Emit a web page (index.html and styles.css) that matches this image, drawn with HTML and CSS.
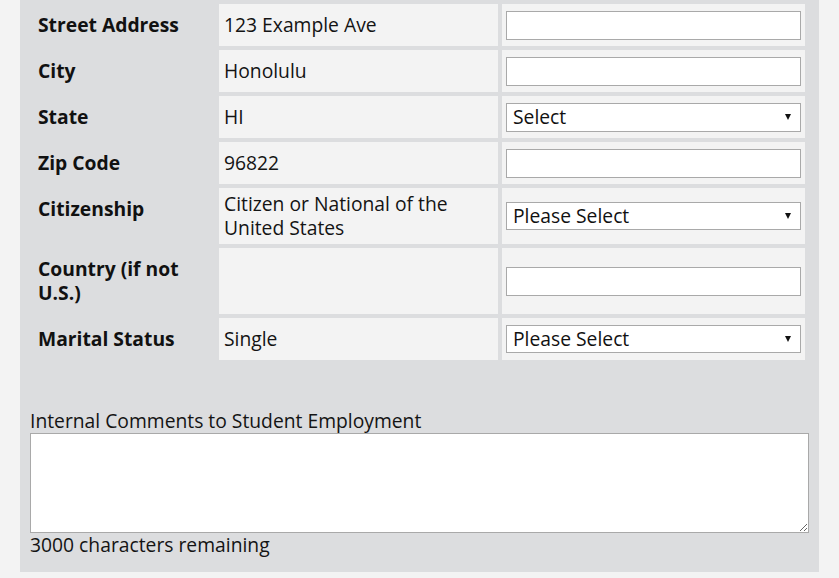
FILE: index.html
```html
<!DOCTYPE html>
<html>
<head>
<meta charset="utf-8">
<link rel="stylesheet" href="styles.css">
</head>
<body>
<div class="panel">
  <table class="form-table">
    <colgroup><col class="c1"><col class="c2"><col class="c3"></colgroup>
    <tr>
      <th>Street Address</th>
      <td class="val">123 Example Ave</td>
      <td class="ctl"><input type="text" class="field"></td>
    </tr>
    <tr>
      <th>City</th>
      <td class="val">Honolulu</td>
      <td class="ctl"><input type="text" class="field"></td>
    </tr>
    <tr>
      <th>State</th>
      <td class="val">HI</td>
      <td class="ctl"><span class="sel"><select class="field select"><option>Select</option></select></span></td>
    </tr>
    <tr>
      <th>Zip Code</th>
      <td class="val">96822</td>
      <td class="ctl"><input type="text" class="field"></td>
    </tr>
    <tr>
      <th>Citizenship</th>
      <td class="val">Citizen or National of the United States</td>
      <td class="ctl"><span class="sel"><select class="field select short"><option>Please Select</option></select></span></td>
    </tr>
    <tr>
      <th>Country (if not U.S.)</th>
      <td class="val"></td>
      <td class="ctl"><input type="text" class="field"></td>
    </tr>
    <tr>
      <th>Marital Status</th>
      <td class="val">Single</td>
      <td class="ctl"><span class="sel"><select class="field select short"><option>Please Select</option></select></span></td>
    </tr>
  </table>
  <div class="comments">
    <label class="comments-label" for="cm">Internal Comments to Student Employment</label>
    <textarea id="cm" class="comments-box"></textarea>
    <div class="remaining">3000 characters remaining</div>
  </div>
</div>
</body>
</html>
```
FILE: styles.css
```css
html, body {
  margin: 0;
  padding: 0;
  background: #f3f3f3;
}
body {
  font-family: "Open Sans", "Liberation Sans", sans-serif;
  font-size: 19.3px;
  line-height: 24px;
  color: #141414;
}
.panel {
  margin-left: 20px;
  width: 799px;
  box-sizing: border-box;
  padding: 0 10px 15px;
  background: #dcdddf;
}
.form-table {
  width: 779px;
  table-layout: fixed;
  border-collapse: separate;
  border-spacing: 4px;
}
.c1 { width: 181px; }
.c2 { width: 279px; }
.c3 { width: 303px; }
.form-table th {
  text-align: left;
  vertical-align: top;
  font-weight: 700;
  padding: 9px 4px;
  color: #111;
}
.form-table .val {
  background: #f3f3f3;
  padding: 4px 5px;
  vertical-align: middle;
}
.form-table .ctl {
  background: #f3f3f3;
  padding: 4px;
  vertical-align: middle;
}
.field {
  display: block;
  width: 100%;
  height: 29px;
  box-sizing: border-box;
  margin: 0;
  border: 1px solid #a9a9a9;
  border-radius: 0;
  background: #fff;
  font: inherit;
  color: #111;
  outline: none;
}
.sel {
  display: block;
  position: relative;
}
.select {
  -webkit-appearance: none;
  appearance: none;
  padding: 0 20px 0 6px;
  line-height: 26px;
}
.select.short { height: 28px; }
.sel::after {
  content: "";
  position: absolute;
  right: 10px;
  top: 50%;
  margin-top: -3px;
  border-left: 3.5px solid transparent;
  border-right: 3.5px solid transparent;
  border-top: 6px solid #111;
  pointer-events: none;
}
.comments {
  padding-top: 45px;
}
.comments-label {
  display: block;
}
.comments-box {
  display: block;
  width: 779px;
  height: 100px;
  box-sizing: border-box;
  margin: 0;
  border: 1px solid #a9a9a9;
  background: #fff;
  font: inherit;
}
.remaining {
  display: block;
}
```
